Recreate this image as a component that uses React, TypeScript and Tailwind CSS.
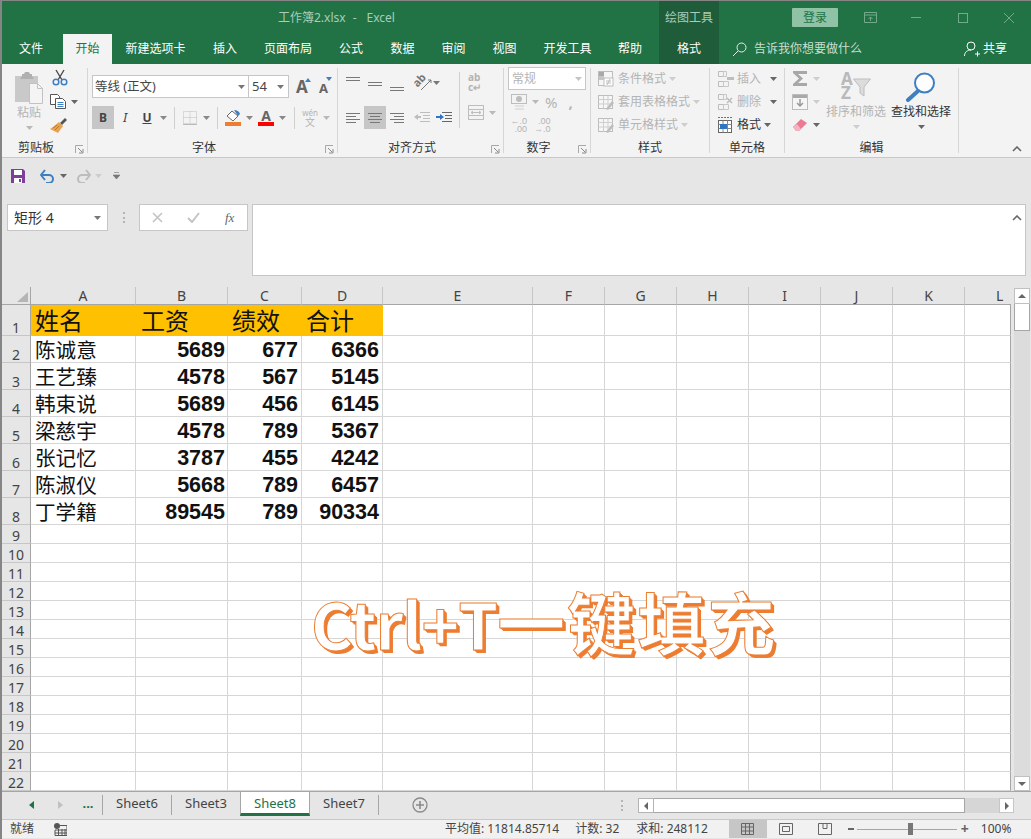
import React from 'react';

const colW = ['A', 'B', 'C', 'D', 'E', 'F', 'G', 'H', 'I', 'J', 'K', 'L'];

const people = [
  ['陈诚意', 5689, 677, 6366],
  ['王艺臻', 4578, 567, 5145],
  ['韩束说', 5689, 456, 6145],
  ['梁慈宇', 4578, 789, 5367],
  ['张记忆', 3787, 455, 4242],
  ['陈淑仪', 5668, 789, 6457],
  ['丁学籍', 89545, 789, 90334],
];

const tabs = [
  { label: '文件', cls: 'w-[61px] pr-[3px] text-white' },
  { label: '开始', cls: 'w-[49px] bg-[#f3f3f3] text-[#217346]' },
  { label: '新建选项卡', cls: 'w-[87px] text-white' },
  { label: '插入', cls: 'w-[52px] text-white' },
  { label: '页面布局', cls: 'w-[74px] text-white' },
  { label: '公式', cls: 'w-[52px] text-white' },
  { label: '数据', cls: 'w-[51px] text-white' },
  { label: '审阅', cls: 'w-[51px] text-white' },
  { label: '视图', cls: 'w-[51px] text-white' },
  { label: '开发工具', cls: 'w-[75px] text-white' },
  { label: '帮助', cls: 'w-[50px] mr-[4px] text-white' },
  { label: '格式', cls: 'w-[60px] bg-[#1e5c3a] text-white' },
];

function Caret({ className = '', color = '#b9b9b9' }: { className?: string; color?: string }) {
  return (
    <svg width="7" height="4" viewBox="0 0 7 4" className={'shrink-0 ' + className}>
      <path d="M0 0h7L3.5 4z" fill={color} />
    </svg>
  );
}

function Launcher() {
  return (
    <svg width="9" height="9" viewBox="0 0 9 9" className="absolute bottom-[3px] right-[3px]">
      <path d="M0.5 8V0.5H8" fill="none" stroke="#a8a8a8" />
      <path d="M3 3l4 4M4 8h4V4" fill="none" stroke="#8a8a8a" />
    </svg>
  );
}

function Sep() {
  return <div className="mt-[4px] h-[85px] w-px shrink-0 bg-[#d6d6d6]" />;
}

function VLine({ className = '' }: { className?: string }) {
  return <div className={'h-[22px] w-px shrink-0 bg-[#d0d0d0] ' + className} />;
}

function Group({ cls, label, launcher, children }: { cls: string; label: string; launcher?: boolean; children: React.ReactNode }) {
  return (
    <div className={'relative flex h-[93px] shrink-0 flex-col pt-[3px] ' + cls}>
      <div className="h-[73px]">{children}</div>
      <div className={'h-[16px] text-center text-[12px] leading-[16px] text-[#333] ' + (launcher ? 'pr-[17px]' : '')}>{label}</div>
      {launcher && <Launcher />}
    </div>
  );
}

function Lines({ w = 14, rows, className = '', color = '#777' }: { w?: number; rows: number[][]; className?: string; color?: string }) {
  return (
    <svg width={w} height="10" viewBox={`0 0 ${w} 10`} className={'shrink-0 ' + className}>
      {rows.map((r, i) => (
        <rect key={i} x={r[0]} y={r[1]} width={r[2]} height="1" fill={color} />
      ))}
    </svg>
  );
}

function StyleIcon() {
  return (
    <svg width="16" height="16" viewBox="0 0 16 16" className="shrink-0">
      <rect x="0.5" y="1.5" width="14" height="13" fill="#f6f6f6" stroke="#bdbdbd" />
      <path d="M0.5 5.5h14M5.5 1.5v13M10 1.5v13M0.5 10h14" stroke="#cfcfcf" />
      <path d="M8 15l6-8 2 2-6 7z" fill="#bdbdbd" />
    </svg>
  );
}

function CellsIcon({ kind }: { kind: 'ins' | 'del' }) {
  return (
    <svg width="18" height="16" viewBox="0 0 18 16" className="shrink-0">
      <path d="M1.5 0.5h5v5h-5zM1.5 10.5h5v5h-5z" fill="none" stroke="#bdbdbd" />
      <path d="M6.5 10.5h5v5h-5zM6.5 0.5h3v5h-3z" fill="none" stroke="#c8c8c8" />
      {kind === 'ins' ? (
        <path d="M10 7.5h7" stroke="#bdbdbd" strokeWidth="3" />
      ) : (
        <path d="M10 4l5 5M15 4l-5 5" stroke="#bdbdbd" strokeWidth="1.5" />
      )}
    </svg>
  );
}

function Clipboard() {
  return (
    <div className="flex h-full">
      <div className="ml-[12px] flex w-[30px] flex-col items-center">
        <svg width="30" height="32" viewBox="0 0 30 32" className="mt-[5px]">
          <rect x="1" y="4" width="23" height="26" fill="#c9c9c9" />
          <path d="M8 4V2h2l1-2h4l1 2h2v2l2 3H6z" fill="#b0b0b0" />
          <path d="M15.5 11.5h8l5 5v15h-13z" fill="#f4f4f4" stroke="#c2c2c2" />
          <path d="M23.5 11.5v5h5" fill="none" stroke="#c2c2c2" />
        </svg>
        <div className="mt-px text-[12px] leading-[16px] text-[#b4b4b4]">粘贴</div>
        <Caret className="mt-[5px]" />
      </div>
      <div className="ml-[6px] flex flex-col">
        <svg width="16" height="17" viewBox="0 0 16 17" className="ml-[2px] mt-[2px]">
          <path d="M4 1l6 10M12 1L6 11" stroke="#4b4b4b" strokeWidth="1.4" />
          <circle cx="4" cy="13" r="2.8" fill="none" stroke="#3f7fc0" strokeWidth="1.5" />
          <circle cx="12" cy="13" r="2.8" fill="none" stroke="#3f7fc0" strokeWidth="1.5" />
        </svg>
        <div className="mt-[8px] flex items-center">
          <svg width="16" height="15" viewBox="0 0 16 15">
            <path d="M0.5 0.5h7l2 2v8h-9z" fill="#fff" stroke="#555" />
            <path d="M5.5 4.5h7l3 3v7h-10z" fill="#fff" stroke="#555" />
            <path d="M7.5 8.5h6M7.5 10.5h6M7.5 12.5h6" stroke="#3f7fc0" />
          </svg>
          <Caret className="ml-[5px]" color="#666" />
        </div>
        <svg width="17" height="15" viewBox="0 0 17 15" className="mt-[9px]">
          <path d="M10 5l5-5 2 2-5 5z" fill="#555" />
          <path d="M9 4l4 4-5 7-8-4 3-2z" fill="#e9a24f" />
          <path d="M3 10l4-3M5 12l4-4" stroke="#b87a30" />
        </svg>
      </div>
    </div>
  );
}

function FontGroup() {
  return (
    <div className="flex flex-col pl-[4px] pt-[8px]">
      <div className="flex h-[23px] items-center">
        <div className="flex h-[23px] w-[157px] items-center border border-[#c6c6c6] bg-white pl-[2px] pt-px text-[12.5px] text-[#444]">
          <span>等线 (正文)</span>
          <Caret className="ml-auto mr-[3px]" color="#777" />
        </div>
        <div className="flex h-[23px] w-[40px] items-center border border-l-0 border-[#c6c6c6] bg-white pl-[3px] pt-px text-[13px] text-[#444]">
          <span>54</span>
          <Caret className="ml-auto mr-[4px]" color="#777" />
        </div>
        <div className="relative ml-[7px] w-[14px] text-[17px] font-bold leading-[18px] text-[#666]">
          A
          <svg width="6" height="4" viewBox="0 0 6 4" className="absolute left-[9px] top-0"><path d="M0 4h6L3 0z" fill="#3f7fc0" /></svg>
        </div>
        <div className="relative ml-[9px] mt-[2px] w-[12px] text-[13px] font-bold leading-[16px] text-[#666]">
          A
          <svg width="6" height="4" viewBox="0 0 6 4" className="absolute left-[7px] top-[-3px]"><path d="M0 0h6L3 4z" fill="#3f7fc0" /></svg>
        </div>
      </div>
      <div className="mt-[8px] flex h-[23px] items-center">
        <div className="flex h-[23px] w-[22px] items-center justify-center bg-[#c6c6c6] text-[12px] font-bold text-[#444]">B</div>
        <div className="w-[22px] text-center text-[13px] italic text-[#444]">I</div>
        <div className="w-[22px] text-center text-[12px] font-bold text-[#444] underline">U</div>
        <Caret className="ml-[2px]" color="#888" />
        <VLine className="ml-[7px]" />
        <svg width="14" height="14" viewBox="0 0 14 14" className="ml-[8px]">
          <path d="M0.5 0.5h13v12h-13zM7 0.5v12M0.5 6.5h13" fill="none" stroke="#bdbdbd" strokeDasharray="1 1" />
          <path d="M0 13.5h14" stroke="#bbb" />
        </svg>
        <Caret className="ml-[6px]" color="#888" />
        <VLine className="ml-[7px]" />
        <div className="ml-[7px] flex w-[16px] flex-col items-center">
          <svg width="16" height="12" viewBox="0 0 16 12">
            <path d="M7 1l6 5-5 5-6-5z" fill="#fff" stroke="#666" />
            <path d="M9 0c3 0 5 1 6 4l-2 2z" fill="#3f7fc0" />
          </svg>
          <div className="h-[4px] w-[16px] bg-[#ed7d31]" />
        </div>
        <Caret className="ml-[5px]" color="#888" />
        <div className="ml-[5px] flex w-[16px] flex-col items-center">
          <div className="h-[12px] text-[14px] font-bold leading-[12px] text-[#666]">A</div>
          <div className="h-[4px] w-[16px] bg-[#ff0000]" />
        </div>
        <Caret className="ml-[5px]" color="#888" />
        <VLine className="ml-[8px]" />
        <div className="ml-[7px] flex w-[16px] flex-col items-center leading-none text-[#b4b4b4]">
          <span className="text-[8px] leading-[9px]">wén</span>
          <span className="text-[10px] leading-[11px]">文</span>
        </div>
        <Caret className="ml-[5px]" />
      </div>
    </div>
  );
}

function AlignGroup() {
  return (
    <div className="flex h-full pl-[8px] pt-[5px]">
      <div className="w-[113px]">
        <div className="flex h-[28px] items-start">
          <Lines className="mt-[4px]" rows={[[0, 1, 14], [0, 4, 14], [0, 7, 0]]} />
          <Lines className="ml-[8px] mt-[9px]" rows={[[0, 1, 14], [0, 4, 14]]} />
          <Lines className="ml-[8px] mt-[14px]" rows={[[0, 1, 14], [0, 4, 14]]} />
          <svg width="18" height="19" viewBox="0 0 18 19" className="ml-[10px] mt-px overflow-visible">
            <text x="0" y="11" fontSize="11" fontWeight="700" fill="#777" transform="rotate(-48 6 9)">ab</text>
            <path d="M7 17L17 7M14 7h3v3" fill="none" stroke="#777" />
          </svg>
          <Caret className="ml-px mt-[9px]" color="#777" />
        </div>
        <div className="mt-[6px] flex h-[23px] items-center">
          <Lines rows={[[0, 0, 14], [0, 3, 10], [0, 6, 14], [0, 9, 10]]} />
          <div className="ml-[4px] flex h-[23px] w-[22px] items-center justify-center bg-[#c6c6c6]">
            <Lines rows={[[0, 0, 14], [2, 3, 10], [0, 6, 14], [2, 9, 10]]} />
          </div>
          <Lines className="ml-[4px]" rows={[[0, 0, 14], [4, 3, 10], [0, 6, 14], [4, 9, 10]]} />
          <svg width="16" height="12" viewBox="0 0 16 12" className="ml-[10px]">
            <path d="M6 0.5h10M9 3.5h7M9 6.5h7M6 9.5h10" stroke="#bdbdbd" />
            <path d="M0 5l4-3v2h3v2H4v2z" fill="#bdbdbd" />
          </svg>
          <svg width="16" height="12" viewBox="0 0 16 12" className="ml-[6px]">
            <path d="M6 0.5h10M9 3.5h7M9 6.5h7M6 9.5h10" stroke="#666" />
            <path d="M8 5L4 2v2H0v2h4v2z" fill="#2f75c0" />
          </svg>
        </div>
      </div>
      <VLine className="!h-[56px]" />
      <div className="ml-[8px] flex flex-col">
        <div className="mt-px flex h-[22px] flex-col items-start text-[#b4b4b4]">
          <span className="text-[10px] font-bold leading-[9px]">ab</span>
          <span className="text-[10px] font-bold leading-[10px]">c↵</span>
        </div>
        <div className="mt-[10px] flex items-center">
          <svg width="16" height="15" viewBox="0 0 16 15">
            <rect x="0.5" y="0.5" width="15" height="14" fill="none" stroke="#bdbdbd" />
            <path d="M0.5 4.5h15M0.5 10.5h15M3 7.5h10M3 7.5l2-1.5M3 7.5l2 1.5M13 7.5l-2-1.5M13 7.5l-2 1.5" fill="none" stroke="#bdbdbd" />
          </svg>
          <Caret className="ml-[5px]" />
        </div>
      </div>
    </div>
  );
}

function NumberGroup() {
  return (
    <div className="flex flex-col pl-[4px]">
      <div className="flex h-[23px] w-[78px] items-center border border-[#c6c6c6] bg-white pl-[3px] text-[12px] text-[#b4b4b4]">
        <span>常规</span>
        <Caret className="ml-auto mr-[3px]" color="#c4c4c4" />
      </div>
      <div className="mt-[2px] flex h-[20px] items-center pl-[3px] text-[#b4b4b4]">
        <svg width="16" height="16" viewBox="0 0 16 16">
          <rect x="0.5" y="0.5" width="15" height="9" fill="none" stroke="#bdbdbd" />
          <circle cx="8" cy="5" r="3" fill="#bdbdbd" />
          <path d="M4 12h9M4 15h9" stroke="#d0d0d0" />
        </svg>
        <Caret className="ml-[5px]" />
        <span className="ml-[6px] text-[15px]">%</span>
        <span className="ml-[11px] text-[15px] font-bold leading-[14px]">,</span>
      </div>
      <div className="mt-[5px] flex h-[20px] pl-[3px] text-[9px] leading-[8px] text-[#b4b4b4] [font-family:'Liberation_Sans',sans-serif]">
        <div className="flex w-[23px] flex-col items-end pr-[7px]"><span>←.0</span><span>.00</span></div>
        <div className="flex flex-col items-end"><span>.00</span><span>→.0</span></div>
      </div>
    </div>
  );
}

function StylesGroup() {
  const rows = ['条件格式', '套用表格格式', '单元格样式'];
  return (
    <div className="flex flex-col pl-[7px]">
      {rows.map((r, i) => (
        <div key={r} className="flex h-[23px] items-center text-[12px] text-[#b4b4b4]">
          {i === 0 ? (
            <svg width="16" height="16" viewBox="0 0 16 16" className="shrink-0">
              <rect x="0.5" y="0.5" width="14" height="14" fill="#f6f6f6" stroke="#bdbdbd" />
              <rect x="1" y="1" width="5" height="4" fill="#a9a9a9" />
              <rect x="1" y="5" width="5" height="4" fill="#c6c6c6" />
              <rect x="6" y="7" width="9" height="8" fill="#fff" stroke="#bdbdbd" />
              <path d="M8 10h5M8 12h5M12 8l-3 6" stroke="#bdbdbd" />
            </svg>
          ) : (
            <StyleIcon />
          )}
          <span className="ml-[4px]">{r}</span>
          <Caret className="ml-[3px]" color="#cdcdcd" />
        </div>
      ))}
    </div>
  );
}

function CellsGroup() {
  return (
    <div className="flex flex-col pl-[7px]">
      <div className="flex h-[23px] items-center text-[12px] text-[#b4b4b4]">
        <CellsIcon kind="ins" />
        <span className="ml-[2px]">插入</span>
        <Caret className="ml-[9px]" color="#666" />
      </div>
      <div className="flex h-[23px] items-center text-[12px] text-[#b4b4b4]">
        <CellsIcon kind="del" />
        <span className="ml-[2px]">删除</span>
        <Caret className="ml-[9px]" color="#666" />
      </div>
      <div className="flex h-[23px] items-center text-[12px] text-[#333]">
        <svg width="18" height="16" viewBox="0 0 18 16" className="shrink-0">
          <path d="M1 0.5h14" stroke="#3f7fc0" strokeDasharray="2 1" />
          <rect x="1.5" y="3.5" width="13" height="12" fill="#fff" stroke="#666" />
          <path d="M1.5 7.5h13M1.5 11.5h13M6 3.5v12M10.5 3.5v12" stroke="#888" />
          <rect x="3" y="7" width="7" height="5" fill="#2f75c0" />
        </svg>
        <span className="ml-[2px]">格式</span>
        <Caret className="ml-[3px]" color="#666" />
      </div>
    </div>
  );
}

function EditGroup() {
  return (
    <div className="flex h-full">
      <div className="ml-[7px] flex w-[32px] flex-col">
        <div className="flex h-[23px] items-center">
          <svg width="16" height="15" viewBox="0 0 16 15">
            <path d="M1 0h14v3H6l5 4.500L6 12h9v3H1v-2l6-5.500L1 2z" fill="#a8a8a8" />
          </svg>
          <Caret className="ml-[5px]" color="#cdcdcd" />
        </div>
        <div className="flex h-[23px] items-center">
          <svg width="16" height="16" viewBox="0 0 16 16">
            <rect x="0.5" y="0.5" width="15" height="15" fill="#f6f6f6" stroke="#bdbdbd" />
            <rect x="1" y="1" width="14" height="3" fill="#a9a9a9" />
            <path d="M8 5v7M5 9l3 3 3-3" fill="none" stroke="#9a9a9a" strokeWidth="1.5" />
          </svg>
          <Caret className="ml-[5px]" color="#cdcdcd" />
        </div>
        <div className="flex h-[23px] items-center">
          <svg width="16" height="14" viewBox="0 0 16 14">
            <path d="M1 9l8-8 6 4-8 8H4z" fill="#ea7b93" />
            <path d="M1 9l3 4h3l2-2-4-5z" fill="#f3b3c0" />
          </svg>
          <Caret className="ml-[5px]" color="#666" />
        </div>
      </div>
      <div className="ml-[2px] flex w-[60px] flex-col items-center">
        <div className="flex h-[35px] items-center pt-[2px] text-[#b9b9b9]">
          <div className="flex flex-col text-[17px] font-bold leading-[14px]"><span>A</span><span>Z</span></div>
          <svg width="18" height="20" viewBox="0 0 18 20" className="mt-[4px]">
            <path d="M0.5 1h17l-6.5 8v9l-4-3V9z" fill="#dcdcdc" stroke="#bdbdbd" />
          </svg>
        </div>
        <div className="mt-[2px] whitespace-nowrap text-[12px] leading-[16px] text-[#b4b4b4]">排序和筛选</div>
        <Caret className="mt-[5px]" color="#cdcdcd" />
      </div>
      <div className="ml-[5px] flex w-[60px] flex-col items-center">
        <svg width="32" height="30" viewBox="0 0 32 30" className="mt-[5px]">
          <circle cx="19.5" cy="11" r="9.5" fill="#fdfdfd" stroke="#3f7fc0" strokeWidth="2" />
          <path d="M13 19L3 28" stroke="#3f7fc0" strokeWidth="4" strokeLinecap="round" />
        </svg>
        <div className="mt-[2px] whitespace-nowrap text-[12px] leading-[16px] text-[#333]">查找和选择</div>
        <Caret className="mt-[5px]" color="#666" />
      </div>
    </div>
  );
}

function Sheet() {
  const empty = 'border-b border-r border-[#d6d6d6] bg-white';
  return (
    <div className="grid w-[1009px] shrink-0 grid-cols-[29px_105px_92px_74px_81px_150px_72px_72px_72px_72px_72px_72px_46px] grid-rows-[18px_31px_repeat(7,27px)_repeat(14,19px)] border-r-0">
      <div className="relative border-b border-r border-[#a6a6a6] bg-[#e6e6e6]">
        <svg width="11" height="10" viewBox="0 0 11 10" className="absolute left-[15px] top-[5px]"><path d="M11 0v10H0z" fill="#b5b5b5" /></svg>
      </div>
      {colW.map((c, i) => (
        <div
          key={c}
          className={
            'border-b border-b-[#a6a6a6] bg-[#e6e6e6] text-[14px] leading-[17px] text-[#444] ' +
            (i === 11 ? 'pl-[31px] text-left' : 'border-r border-r-[#c6c6c6] text-center')
          }
        >
          {c}
        </div>
      ))}
      {Array.from({ length: 22 }).map((_, r) => (
        <React.Fragment key={r}>
          <div className="flex items-end justify-center border-b border-r border-b-[#c6c6c6] border-r-[#a6a6a6] bg-[#e6e6e6] text-[14px] leading-[15px] text-[#444]">{r + 1}</div>
          {colW.map((c, i) => {
            if (r === 0 && i < 4) {
              const head = ['姓名', '工资', '绩效', '合计'][i];
              return (
                <div key={c} className={'flex items-center bg-[#ffc000] text-[24px] leading-[30px] text-[#111] ' + (i === 1 ? 'pl-[5px]' : 'pl-[4px]')}>{head}</div>
              );
            }
            if (r > 0 && r < 8 && i < 4) {
              const v = people[r - 1][i];
              if (i === 0) {
                return (
                  <div key={c} className={'flex items-center pl-[4px] pt-[2px] text-[20.6px] leading-[26px] text-[#111] ' + empty}>{v}</div>
                );
              }
              return (
                <div key={c} className={"flex items-center justify-end pt-[2px] text-[21.5px] font-bold leading-[26px] text-[#111] [font-family:'Liberation_Sans',sans-serif] " + (i === 1 ? 'pr-[2px] ' : 'pr-[3px] ') + empty}>{v}</div>
              );
            }
            return <div key={c} className={i === 11 ? 'border-b border-r border-b-[#d6d6d6] border-r-[#a6a6a6] bg-white' : empty} />;
          })}
        </React.Fragment>
      ))}
    </div>
  );
}

export default function App() {
  return (
    <div className="relative flex h-[839px] w-[1031px] flex-col overflow-hidden border-l-2 border-t border-[#858585] bg-[#e6e6e6] [font-family:'Noto_Sans','Noto_Sans_CJK_SC',sans-serif]">
      {/* title bar */}
      <div className="flex h-[33px] shrink-0 items-center bg-[#217346] text-[12px] text-[#a9cdb8]">
        <div className="ml-[276px] flex w-[381px] whitespace-nowrap">
          <span>工作簿2.xlsx</span>
          <span className="ml-[7px]">-</span>
          <span className="ml-[10px]">Excel</span>
        </div>
        <div className="flex h-full w-[60px] items-center justify-center bg-[#1e5c3a] text-[#a9cdb8]">绘图工具</div>
        <div className="ml-[73px] flex h-[19px] w-[46px] items-center justify-center rounded-[1px] bg-[#90c2a6] text-[#217346]">登录</div>
        <svg width="13" height="11" viewBox="0 0 13 11" className="ml-[26px]">
          <path d="M0.5 0.5h12v10H0.5zM0.5 3h12M6.5 9V5M4.5 7l2-2 2 2" fill="none" stroke="#74aa8c" />
        </svg>
        <div className="ml-[34px] h-px w-[10px] bg-[#74aa8c]" />
        <div className="ml-[37px] h-[10px] w-[10px] border border-[#74aa8c]" />
        <svg width="10" height="10" viewBox="0 0 10 10" className="ml-[36px]">
          <path d="M0 0l10 10M10 0L0 10" stroke="#74aa8c" />
        </svg>
      </div>

      {/* tabs */}
      <div className="flex h-[30px] shrink-0 bg-[#217346] text-[12px]">
        {tabs.map((t) => (
          <div key={t.label} className={'flex h-full shrink-0 items-center justify-center ' + t.cls}>{t.label}</div>
        ))}
        <div className="ml-[13px] flex items-center text-[#c9dfd2]">
          <svg width="15" height="15" viewBox="0 0 15 15">
            <circle cx="9.5" cy="5.5" r="4.5" fill="none" stroke="#e4f0e9" />
            <path d="M6 9l-5 5" stroke="#e4f0e9" />
          </svg>
          <span className="ml-[7px] whitespace-nowrap">告诉我你想要做什么</span>
        </div>
        <div className="ml-[102px] flex items-center text-white">
          <svg width="16" height="16" viewBox="0 0 16 16">
            <circle cx="7" cy="5" r="4" fill="none" stroke="#fff" />
            <path d="M0.5 15c0-4 3-6 6.500-6M11 13h5M13.500 10.500v5" fill="none" stroke="#fff" />
          </svg>
          <span className="ml-[3px] whitespace-nowrap">共享</span>
        </div>
      </div>

      {/* ribbon */}
      <div className="relative flex h-[94px] shrink-0 items-start border-b border-[#c8c8c8] bg-[#f3f3f3] text-[12px]">
        <Group cls="w-[85px]" label="剪贴板" launcher>
          <Clipboard />
        </Group>
        <Sep />
        <Group cls="w-[249px]" label="字体" launcher>
          <FontGroup />
        </Group>
        <Sep />
        <Group cls="w-[165px]" label="对齐方式" launcher>
          <AlignGroup />
        </Group>
        <Sep />
        <Group cls="w-[86px]" label="数字" launcher>
          <NumberGroup />
        </Group>
        <Sep />
        <Group cls="w-[118px]" label="样式">
          <StylesGroup />
        </Group>
        <Sep />
        <Group cls="w-[74px]" label="单元格">
          <CellsGroup />
        </Group>
        <Sep />
        <Group cls="w-[173px]" label="编辑">
          <EditGroup />
        </Group>
        <Sep />
        <svg width="10" height="6" viewBox="0 0 10 6" className="absolute bottom-[5px] right-[9px]">
          <path d="M1 5l4-4 4 4" fill="none" stroke="#666" strokeWidth="1.6" />
        </svg>
      </div>

      {/* quick access */}
      <div className="flex h-[32px] shrink-0 items-center bg-[#e6e6e6] pl-[9px] pt-[4px]">
        <svg width="14" height="14" viewBox="0 0 14 14">
          <path d="M0 0h12l2 2v12H0z" fill="#7d3f98" />
          <rect x="3" y="1" width="8" height="5" fill="#fff" />
          <rect x="3" y="9" width="8" height="5" fill="#fff" />
          <rect x="8" y="10" width="2" height="3" fill="#7d3f98" />
        </svg>
        <svg width="15" height="14" viewBox="0 0 15 14" className="ml-[15px]">
          <path d="M2 6h7a4 4 0 0 1 0 8H6" fill="none" stroke="#3f7fc0" strokeWidth="2" />
          <path d="M5 1L1 6l4 5" fill="none" stroke="#3f7fc0" strokeWidth="2" />
        </svg>
        <Caret className="ml-[5px]" color="#666" />
        <svg width="15" height="14" viewBox="0 0 15 14" className="ml-[9px]">
          <path d="M13 6H6a4 4 0 0 0 0 8h3" fill="none" stroke="#bdbdbd" strokeWidth="2" />
          <path d="M10 1l4 5-4 5" fill="none" stroke="#bdbdbd" strokeWidth="2" />
        </svg>
        <Caret className="ml-[4px]" color="#cdcdcd" />
        <svg width="7" height="8" viewBox="0 0 7 8" className="ml-[11px]">
          <path d="M1 0.500h5M0 3h7L3.500 7z" fill="#777" stroke="#777" strokeWidth="0.6" />
        </svg>
      </div>

      {/* formula bar */}
      <div className="flex h-[97px] shrink-0 items-start bg-[#e6e6e6] pl-[5px] pt-[14px]">
        <div className="flex h-[27px] w-[101px] items-center border border-[#c6c6c6] bg-white pl-[6px] text-[14px] text-[#333]">
          <span>矩形 4</span>
          <Caret className="ml-auto mr-[6px]" color="#777" />
        </div>
        <div className="ml-[15px] mt-[8px] flex h-[11px] w-[3px] flex-col justify-between">
          <div className="h-[2px] w-[2px] bg-[#b4b4b4]" />
          <div className="h-[2px] w-[2px] bg-[#b4b4b4]" />
          <div className="h-[2px] w-[2px] bg-[#b4b4b4]" />
        </div>
        <div className="ml-[13px] flex h-[27px] w-[109px] items-center border border-[#c6c6c6] bg-white text-[#c0c0c0]">
          <svg width="11" height="11" viewBox="0 0 11 11" className="ml-[12px]"><path d="M1 1l9 9M10 1l-9 9" stroke="#c4c4c4" strokeWidth="1.6" /></svg>
          <svg width="13" height="11" viewBox="0 0 13 11" className="ml-[24px]"><path d="M1 6l4 4 7-9" fill="none" stroke="#c4c4c4" strokeWidth="2" /></svg>
          <span className="ml-[25px] text-[13px] italic text-[#666] [font-family:'Liberation_Serif',serif]">fx</span>
        </div>
        <div className="relative ml-[4px] h-[72px] w-[774px] border border-[#c6c6c6] bg-white">
          <svg width="10" height="6" viewBox="0 0 10 6" className="absolute right-[3px] top-[10px]">
            <path d="M1 5l4-4 4 4" fill="none" stroke="#666" strokeWidth="1.6" />
          </svg>
        </div>
      </div>

      {/* sheet */}
      <div className="flex h-[505px] shrink-0 border-b border-[#a6a6a6] bg-[#e6e6e6]">
        <Sheet />
        <div className="ml-[3px] mt-px flex w-[16px] flex-col">
          <div className="flex h-[16px] items-center justify-center border border-[#c0c0c0] bg-white">
            <svg width="8" height="4" viewBox="0 0 8 4"><path d="M0 4h8L4 0z" fill="#666" /></svg>
          </div>
          <div className="h-[27px] border border-t-0 border-[#a6a6a6] bg-white" />
          <div className="flex-1 bg-[#dcdcdc]" />
          <div className="flex h-[15px] items-center justify-center border border-[#c0c0c0] bg-white">
            <svg width="8" height="4" viewBox="0 0 8 4"><path d="M0 0h8L4 4z" fill="#666" /></svg>
          </div>
        </div>
      </div>

      {/* sheet tabs */}
      <div className="flex h-[28px] shrink-0 items-start border-b border-[#c8c8c8] bg-[#e6e6e6] text-[13px] text-[#444]">
        <svg width="5" height="8" viewBox="0 0 5 8" className="ml-[27px] mt-[9px]"><path d="M5 0v8L0 4z" fill="#217346" /></svg>
        <svg width="5" height="8" viewBox="0 0 5 8" className="ml-[24px] mt-[9px]"><path d="M0 0v8l5-4z" fill="#c0c0c0" /></svg>
        <div className="ml-[18px] mt-[2px] w-[14px] text-center font-bold leading-[18px] text-[#217346]">...</div>
        <div className="ml-[7px] mt-[3px] h-[20px] w-px bg-[#a6a6a6]" />
        <div className="w-[68px] pt-[2px] text-center leading-[18px]">Sheet6</div>
        <div className="mt-[3px] h-[20px] w-px bg-[#a6a6a6]" />
        <div className="w-[68px] pt-[2px] text-center leading-[18px]">Sheet3</div>
        <div className="h-[24px] w-[70px] border-x border-b-[3px] border-x-[#a6a6a6] border-b-[#217346] bg-white pt-[2px] text-center leading-[18px] text-[#217346]">Sheet8</div>
        <div className="w-[68px] pt-[2px] text-center leading-[18px]">Sheet7</div>
        <div className="mt-[3px] h-[20px] w-px bg-[#a6a6a6]" />
        <svg width="16" height="16" viewBox="0 0 16 16" className="ml-[33px] mt-[5px]">
          <circle cx="8" cy="8" r="7" fill="none" stroke="#8a8a8a" strokeWidth="1.3" />
          <path d="M8 4v8M4 8h8" stroke="#8a8a8a" strokeWidth="1.6" />
        </svg>
        <div className="ml-[193px] mt-[8px] flex h-[11px] flex-col justify-between">
          <div className="h-[2px] w-[2px] bg-[#b4b4b4]" />
          <div className="h-[2px] w-[2px] bg-[#b4b4b4]" />
          <div className="h-[2px] w-[2px] bg-[#b4b4b4]" />
        </div>
        <div className="ml-[15px] mt-[6px] flex h-[15px] w-[376px]">
          <div className="flex w-[16px] items-center justify-center border border-[#b4b4b4] bg-white">
            <svg width="4" height="8" viewBox="0 0 4 8"><path d="M4 0v8L0 4z" fill="#666" /></svg>
          </div>
          <div className="w-[311px] border-y border-r border-[#a6a6a6] bg-white" />
          <div className="w-[34px] bg-[#d6d6d6]" />
          <div className="flex w-[15px] items-center justify-center border border-[#c6c6c6] bg-white">
            <svg width="4" height="8" viewBox="0 0 4 8"><path d="M0 0v8l4-4z" fill="#666" /></svg>
          </div>
        </div>
      </div>

      {/* status bar */}
      <div className="flex h-[18px] shrink-0 items-center bg-[#f1f1f1] text-[12px] text-[#444]">
        <span className="ml-[8px]">就绪</span>
        <svg width="13" height="13" viewBox="0 0 13 13" className="ml-[20px]">
          <circle cx="3" cy="3" r="3" fill="#555" />
          <path d="M6 2.500h7v10H1V7M1 7h12M1 10h12M4.500 6v7M8 6v7M11 6v7" fill="none" stroke="#555" />
        </svg>
        <span className="ml-[378px] whitespace-nowrap">平均值: 11814.85714</span>
        <span className="ml-[16px] whitespace-nowrap">计数: 32</span>
        <span className="ml-[17px] whitespace-nowrap">求和: 248112</span>
        <div className="ml-[21px] flex h-full w-[38px] items-center justify-center bg-[#c6c6c6]">
          <svg width="13" height="12" viewBox="0 0 13 12"><path d="M0.500 0.500h12v11h-12zM0.500 4h12M0.500 8h12M4.500 0.500v11M8.500 0.500v11" fill="none" stroke="#666" /></svg>
        </div>
        <svg width="14" height="12" viewBox="0 0 14 12" className="ml-[12px]"><path d="M0.500 0.500h13v11h-13z M3.500 3.500h7v5h-7z" fill="none" stroke="#666" /></svg>
        <svg width="14" height="12" viewBox="0 0 14 12" className="ml-[25px]"><path d="M0.500 0.500h13v11h-13zM5 0.500v5h4v-5" fill="none" stroke="#666" /></svg>
        <div className="ml-[16px] h-[2px] w-[6px] bg-[#666]" />
        <div className="ml-[3px] flex h-[12px] w-[100px] items-center">
          <div className="h-px w-[51px] bg-[#a6a6a6]" />
          <div className="h-[12px] w-[5px] bg-[#777]" />
          <div className="h-px w-[44px] bg-[#a6a6a6]" />
        </div>
        <span className="ml-[4px] text-[14px] font-bold leading-none text-[#666]">+</span>
        <span className="ml-[12px]">100%</span>
      </div>

      {/* overlay text sitting on the sheet */}
      <div className="absolute left-[309px] top-[575px] whitespace-nowrap text-[68px] font-bold leading-[90px] text-white [-webkit-text-stroke:1px_#ed7d31] [text-shadow:1px_1px_0_#ed7d31,2px_2px_0_#ed7d31,3px_3px_0_#ed7d31] [font-family:'Noto_Sans_CJK_SC',sans-serif]">
        <span className="text-[64px] tracking-[-1px]">Ctrl+T</span>
        <span className="tracking-[2px]">一键填充</span>
      </div>
    </div>
  );
}
